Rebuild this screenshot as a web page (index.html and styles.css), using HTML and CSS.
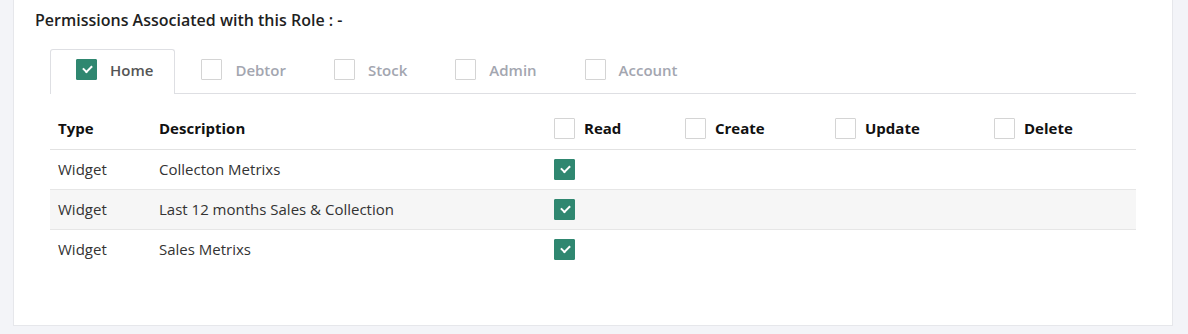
FILE: index.html
```html
<!DOCTYPE html>
<html lang="en">
<head>
    <meta charset="UTF-8">
    <title>Role permissions</title>
    <link rel="stylesheet" href="styles.css">
</head>
<body>
    <div class="card">
        <h3 class="title">Permissions Associated with this Role : -</h3>
        <div class="tabs">
            <div class="tab active"><span class="check on"></span>Home</div>
            <div class="tab"><span class="check"></span>Debtor</div>
            <div class="tab"><span class="check"></span>Stock</div>
            <div class="tab"><span class="check"></span>Admin</div>
            <div class="tab"><span class="check"></span>Account</div>
        </div>
        <table class="perms">
            <thead>
                <tr>
                    <th class="c-type">Type</th>
                    <th class="c-desc">Description</th>
                    <th class="c-read"><span class="check"></span>Read</th>
                    <th class="c-create"><span class="check"></span>Create</th>
                    <th class="c-update"><span class="check"></span>Update</th>
                    <th class="c-delete"><span class="check"></span>Delete</th>
                </tr>
            </thead>
            <tbody>
                <tr>
                    <td>Widget</td>
                    <td>Collecton Metrixs</td>
                    <td><span class="check on"></span></td>
                    <td></td><td></td><td></td>
                </tr>
                <tr class="alt">
                    <td>Widget</td>
                    <td>Last 12 months Sales &amp; Collection</td>
                    <td><span class="check on"></span></td>
                    <td></td><td></td><td></td>
                </tr>
                <tr>
                    <td>Widget</td>
                    <td>Sales Metrixs</td>
                    <td><span class="check on"></span></td>
                    <td></td><td></td><td></td>
                </tr>
            </tbody>
        </table>
    </div>
</body>
</html>
```

FILE: styles.css
```css
* {
    box-sizing: border-box;
    font-family: 'Open Sans', sans-serif;
}
body {
    margin: 0;
    background-color: #f3f4f8;
    height: 334px;
    overflow: hidden;
}
.card {
    margin: 0 15px 0 13px;
    height: 326px;
    background-color: #fff;
    border: 1px solid #e6e7eb;
    border-top: none;
    padding: 0 36px 0 36px;
}
.title {
    margin: 0 0 0 -15px;
    padding-top: 9px;
    font-size: 16px;
    font-weight: 600;
    color: #1f1f1f;
    line-height: 22px;
}
.tabs {
    display: flex;
    margin-top: 18px;
    border-bottom: 1px solid #dedfe3;
}
.tab {
    display: flex;
    align-items: center;
    height: 44px;
    padding: 0 21px 4px 25px;
    border: 1px solid transparent;
    border-bottom: none;
    border-radius: 3px 3px 0 0;
    margin-bottom: -1px;
    font-size: 15px;
    font-weight: 600;
    color: #a3a6b0;
}
.tab.active {
    background-color: #fff;
    border-color: #dedfe3;
    color: #555;
    height: 45px;
    padding-bottom: 5px;
}
.tab .check {
    margin-right: 13px;
}
.check {
    display: inline-block;
    width: 21px;
    height: 21px;
    border: 1px solid #d4d4d4;
    border-radius: 1px;
    background-color: #fff;
    vertical-align: middle;
    position: relative;
}
.check.on {
    background-color: #2f8770;
    border-color: #2f8770;
}
.check.on::after {
    content: "";
    position: absolute;
    left: 6px;
    top: 5px;
    width: 7px;
    height: 4px;
    border-left: 2px solid #fff;
    border-bottom: 2px solid #fff;
    transform: rotate(-45deg);
}
.perms {
    width: 100%;
    border-collapse: collapse;
    margin-top: 14px;
    font-size: 15px;
    color: #333;
}
.perms th {
    text-align: left;
    font-weight: 700;
    color: #111;
    height: 41px;
    padding: 0 8px;
    border-bottom: 1px solid #e2e2e2;
}
.perms th .check {
    margin-right: 9px;
    margin-top: -2px;
}
.perms td {
    height: 40px;
    padding: 0 8px 1px;
    border-top: 1px solid #e6e6e6;
}
.perms tbody tr:first-child td {
    border-top: none;
}
.perms tr.alt td {
    background-color: #f6f6f6;
}
.c-type { width: 101px; }
.c-desc { width: 395px; }
.c-read { width: 131px; }
.c-create { width: 150px; }
.c-update { width: 159px; }
```
